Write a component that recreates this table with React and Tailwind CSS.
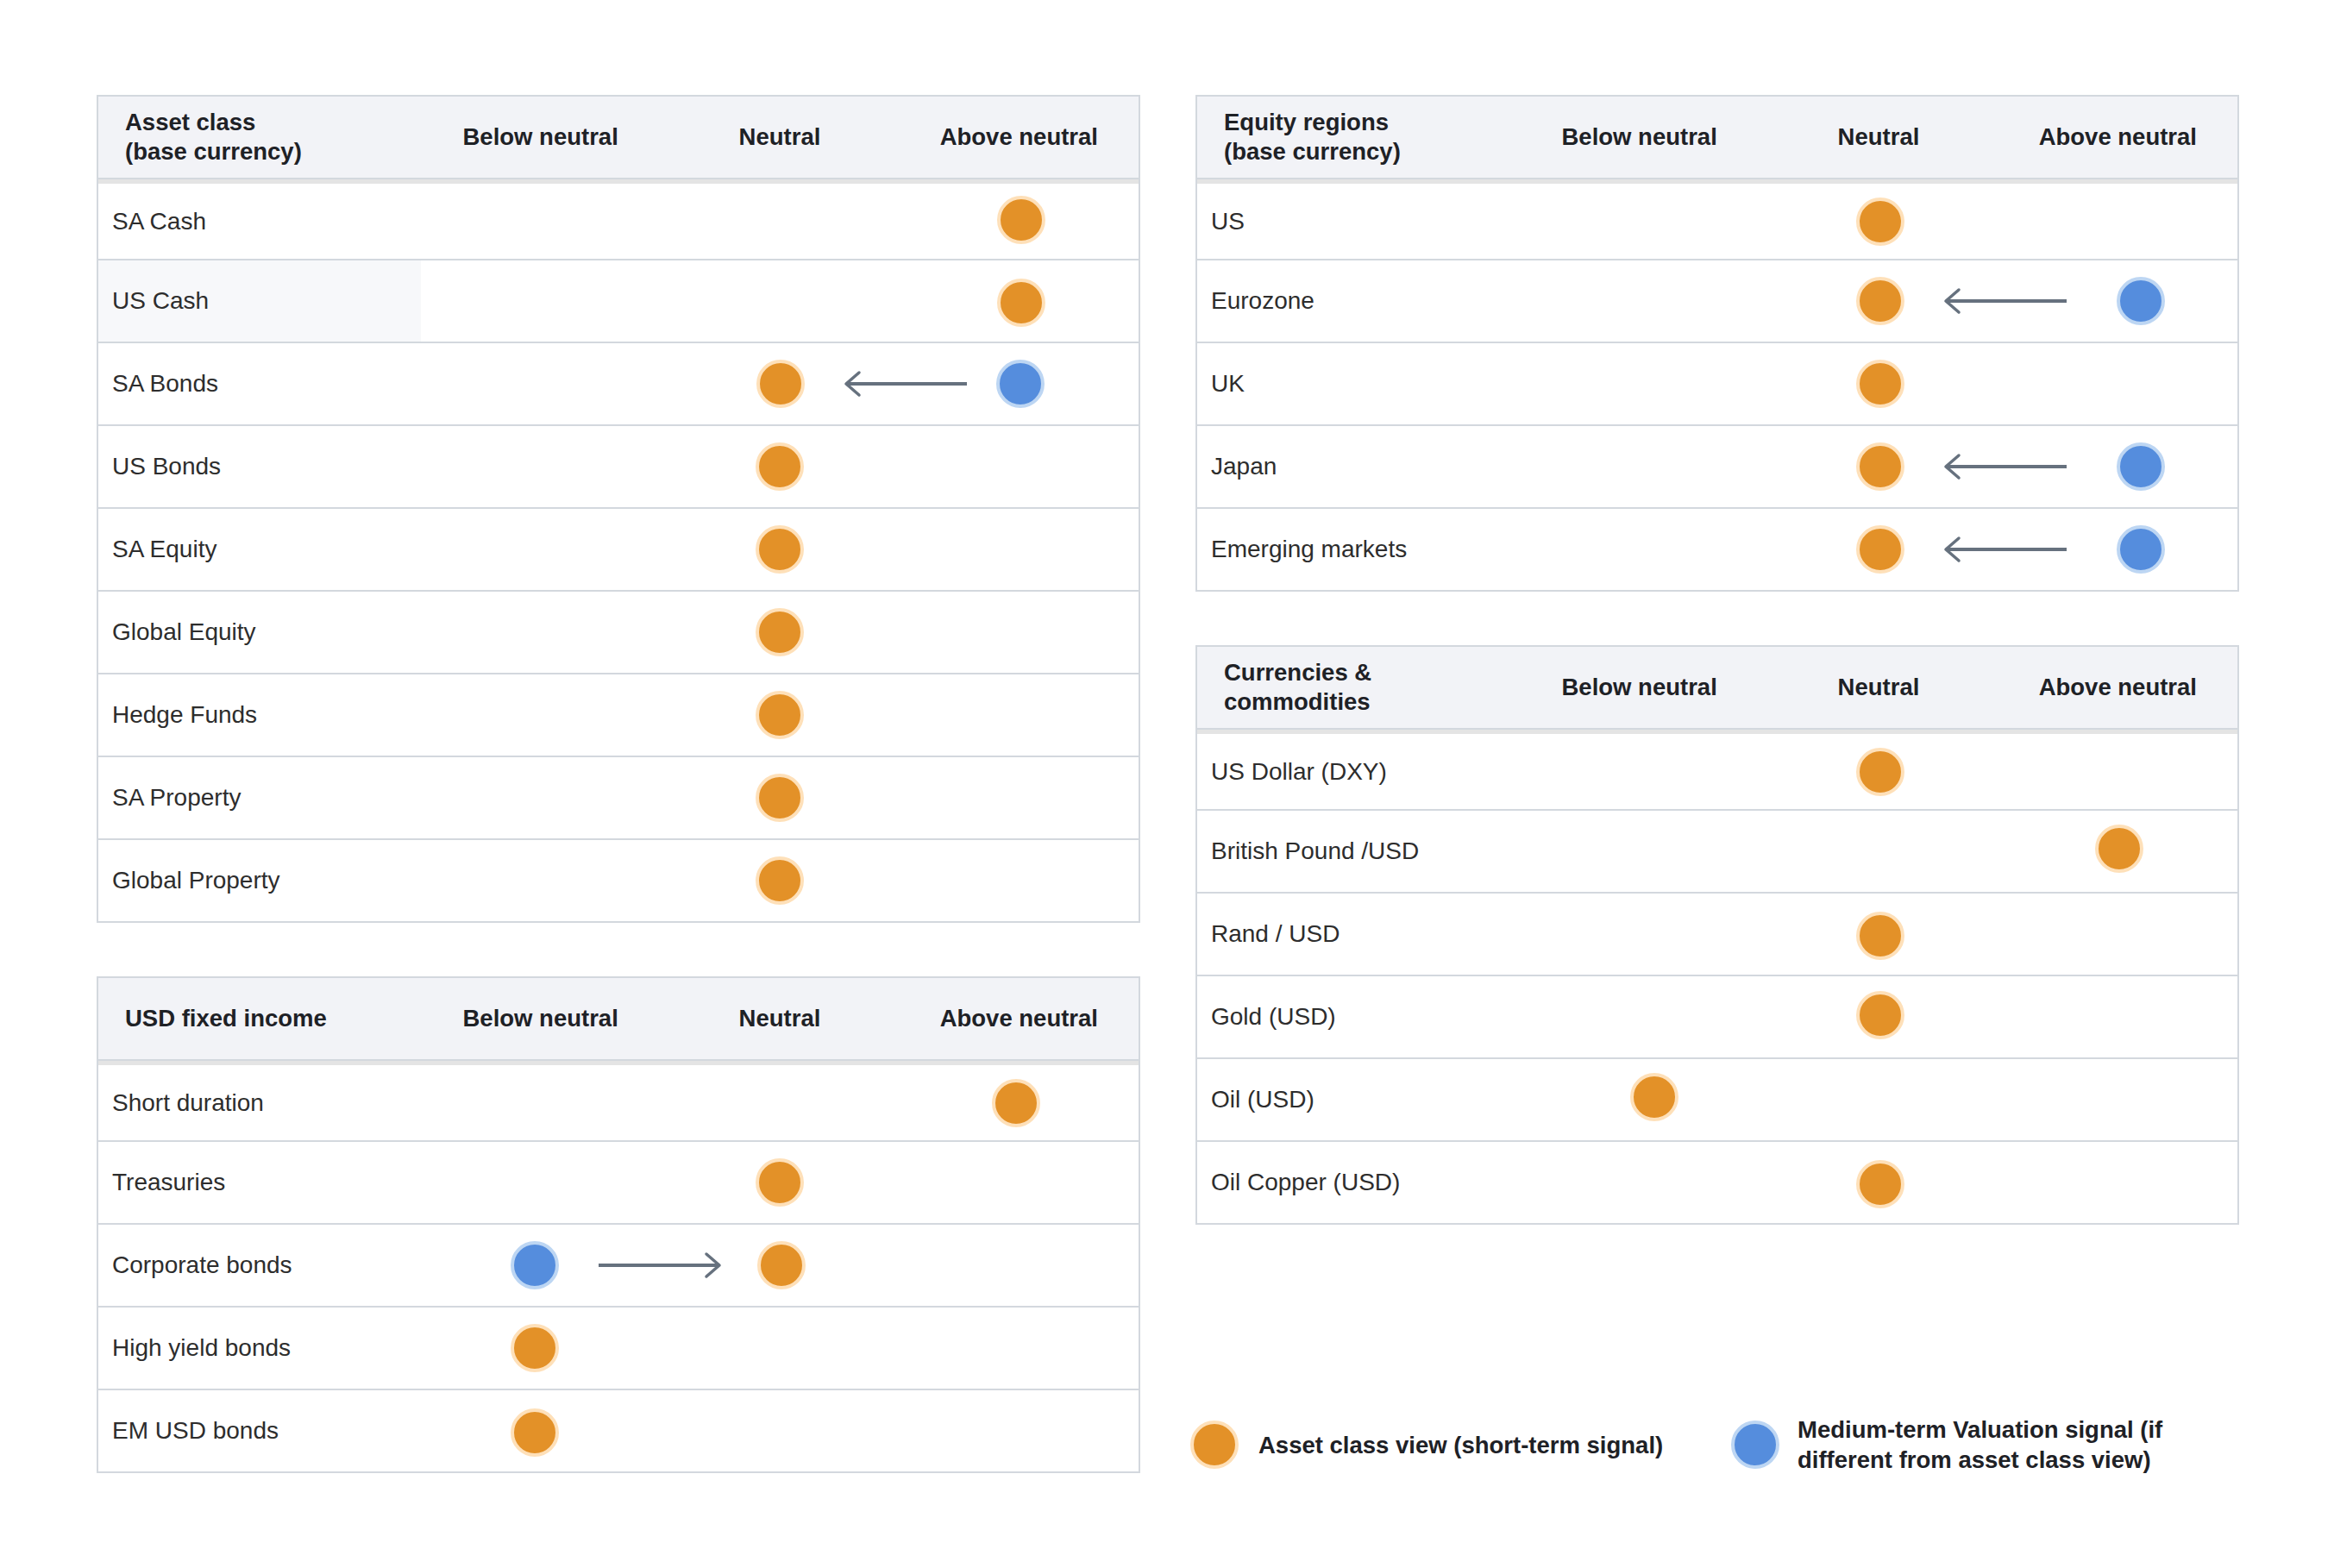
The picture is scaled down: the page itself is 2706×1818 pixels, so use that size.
import React from 'react';

const FONT = "font-['Liberation_Sans',Arial,sans-serif]";

function Dot({ blue = false, className = '' }) {
  return (
    <span
      className={
        'block w-[56px] h-[56px] shrink-0 rounded-full border-4 ' +
        (blue ? 'bg-[#558ddd] border-[#bdd6f3]' : 'bg-[#e39128] border-[#fee0b9]') +
        ' ' +
        className
      }
    />
  );
}

function Arrow({ dir = 'left' }) {
  return (
    <svg width="144" height="32" viewBox="0 0 144 32" className="shrink-0">
      {dir === 'left' ? (
        <>
          <line x1="3" y1="16" x2="143" y2="16" stroke="#66717e" strokeWidth="4" />
          <polyline points="18,3 3,16 18,29" fill="none" stroke="#66717e" strokeWidth="3.5" strokeLinecap="round" strokeLinejoin="round" />
        </>
      ) : (
        <>
          <line x1="1" y1="16" x2="141" y2="16" stroke="#66717e" strokeWidth="4" />
          <polyline points="126,3 141,16 126,29" fill="none" stroke="#66717e" strokeWidth="3.5" strokeLinecap="round" strokeLinejoin="round" />
        </>
      )}
    </svg>
  );
}

// one signal in a single column: col 1 below, 2 neutral, 3 above
function Single({ col, shift = '' }) {
  return (
    <div className="grid grid-cols-3 h-full items-center">
      <div className="flex justify-center">{col === 1 && <Dot className={shift} />}</div>
      <div className="flex justify-center">{col === 2 && <Dot className={shift} />}</div>
      <div className="flex justify-center">{col === 3 && <Dot className={shift} />}</div>
    </div>
  );
}

function Row({ label, first, last, highlight, children }) {
  return (
    <div
      className={
        'grid grid-cols-[374px_1fr_1fr_1fr] ' +
        (first ? 'h-[89px] ' : last ? 'h-[94px] ' : 'h-[96px] ') +
        (last ? '' : 'border-b-2 border-[#d3d8de]')
      }
    >
      <div className={'flex items-center pl-[16px] text-[28px] text-[#2d2d2d] ' + (highlight ? 'bg-[#f7f8fa]' : '')}>
        {label}
      </div>
      <div className="col-span-3">{children}</div>
    </div>
  );
}

function Table({ title, rows }) {
  return (
    <div className="border-2 border-[#d3d8de] bg-white">
      <div className="grid grid-cols-[374px_1fr_1fr_1fr] h-[96px] bg-[#f2f3f7] border-b-2 border-[#d3d8de] font-bold text-[27.5px] text-[#1e2126]">
        <div className="flex items-center pl-[31px] leading-[34px]">{title}</div>
        <div className="flex items-center justify-center">Below neutral</div>
        <div className="flex items-center justify-center">Neutral</div>
        <div className="flex items-center justify-center">Above neutral</div>
      </div>
      <div className="h-[5px] bg-[#e4e4e4]" />
      {rows.map((r, i) => (
        <Row key={r.label} label={r.label} first={i === 0} last={i === rows.length - 1} highlight={r.highlight}>
          {r.signal}
        </Row>
      ))}
    </div>
  );
}

const assetRows = [
  { label: 'SA Cash', signal: <Single col={3} shift="translate-x-[3px] -translate-y-[2px]" /> },
  { label: 'US Cash', highlight: true, signal: <Single col={3} shift="translate-x-[3px] translate-y-[2px]" /> },
  {
    label: 'SA Bonds',
    signal: (
      <div className="flex h-full items-center pl-[389px]">
        <Dot />
        <div className="ml-[45px]"><Arrow dir="left" /></div>
        <Dot blue className="ml-[33px]" />
      </div>
    ),
  },
  { label: 'US Bonds', signal: <Single col={2} /> },
  { label: 'SA Equity', signal: <Single col={2} /> },
  { label: 'Global Equity', signal: <Single col={2} /> },
  { label: 'Hedge Funds', signal: <Single col={2} /> },
  { label: 'SA Property', signal: <Single col={2} /> },
  { label: 'Global Property', signal: <Single col={2} /> },
];

const usdRows = [
  { label: 'Short duration', signal: <Single col={3} shift="-translate-x-[3px]" /> },
  { label: 'Treasuries', signal: <Single col={2} /> },
  {
    label: 'Corporate bonds',
    signal: (
      <div className="flex h-full items-center pl-[104px]">
        <Dot blue />
        <div className="ml-[45px]"><Arrow dir="right" /></div>
        <Dot className="ml-[41px]" />
      </div>
    ),
  },
  { label: 'High yield bonds', signal: <Single col={1} shift="-translate-x-[7px]" /> },
  { label: 'EM USD bonds', signal: <Single col={1} shift="-translate-x-[7px] translate-y-[2px]" /> },
];

const shiftRow = (
  <div className="flex h-full items-center pl-[390px]">
    <Dot />
    <div className="ml-[45px]"><Arrow dir="left" /></div>
    <Dot blue className="ml-[57px]" />
  </div>
);

const equityRows = [
  { label: 'US', signal: <Single col={2} shift="translate-x-[2px]" /> },
  { label: 'Eurozone', signal: shiftRow },
  { label: 'UK', signal: <Single col={2} shift="translate-x-[2px]" /> },
  { label: 'Japan', signal: shiftRow },
  { label: 'Emerging markets', signal: shiftRow },
];

const fxRows = [
  { label: 'US Dollar (DXY)', signal: <Single col={2} shift="translate-x-[2px]" /> },
  { label: 'British Pound /USD', signal: <Single col={3} shift="translate-x-[2px] -translate-y-[3px]" /> },
  { label: 'Rand / USD', signal: <Single col={2} shift="translate-x-[2px] translate-y-[2px]" /> },
  { label: 'Gold (USD)', signal: <Single col={2} shift="translate-x-[2px] -translate-y-[2px]" /> },
  { label: 'Oil (USD)', signal: <Single col={1} shift="translate-x-[17px] -translate-y-[3px]" /> },
  { label: 'Oil Copper (USD)', signal: <Single col={2} shift="translate-x-[2px] translate-y-[2px]" /> },
];

export default function App() {
  return (
    <div className={'min-h-screen bg-white pt-[110px] pl-[112px] ' + FONT}>
      <div className="flex gap-[64px] items-stretch">
        <div className="w-[1210px] flex flex-col gap-[62px]">
          <Table title={<span>Asset class<br />(base currency)</span>} rows={assetRows} />
          <Table title="USD fixed income" rows={usdRows} />
        </div>
        <div className="w-[1210px] flex flex-col gap-[62px]">
          <Table title={<span>Equity regions<br />(base currency)</span>} rows={equityRows} />
          <Table title={<span>Currencies &amp;<br />commodities</span>} rows={fxRows} />
          <div className="mt-auto -ml-[6px] mb-[-2px] flex items-center font-bold text-[27.5px] leading-[35px] text-[#1e2126]">
            <Dot />
            <div className="ml-[23px] w-[500px]">Asset class view (short-term signal)</div>
            <Dot blue className="ml-[48px]" />
            <div className="ml-[21px]">
              Medium-term Valuation signal (if
              <br />
              different from asset class view)
            </div>
          </div>
        </div>
      </div>
    </div>
  );
}
